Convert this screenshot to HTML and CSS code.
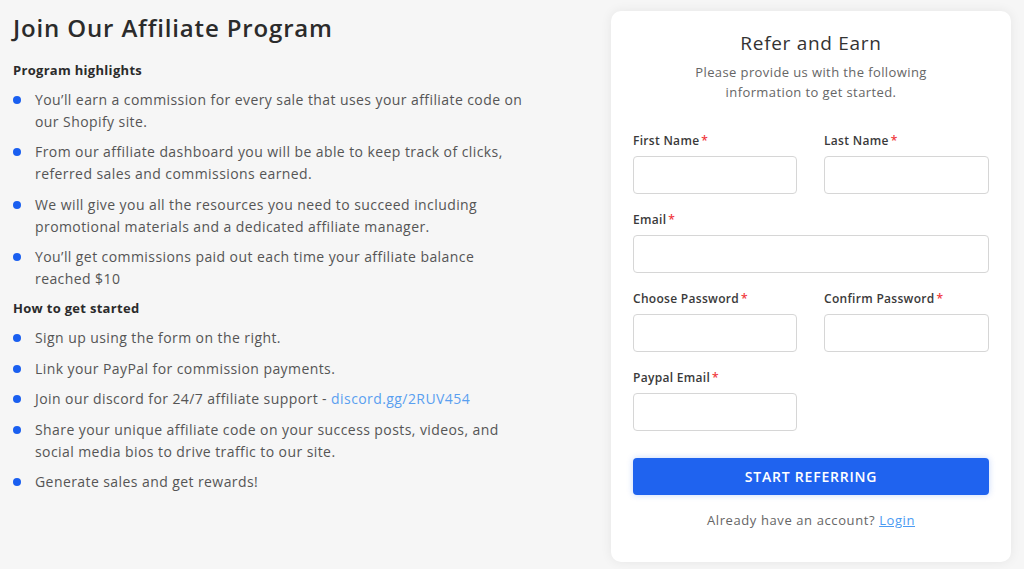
FILE: index.html
```html
<!DOCTYPE html>
<html lang="en">
<head>
<meta charset="utf-8">
<title>Join Our Affiliate Program</title>
<link rel="stylesheet" href="styles.css">
</head>
<body>
<div class="page">
  <section class="info">
    <h1 class="title">Join Our Affiliate Program</h1>
    <h2 class="sub">Program highlights</h2>
    <ul class="list">
      <li>You’ll earn a commission for every sale that uses your affiliate code on<br>our Shopify site.</li>
      <li>From our affiliate dashboard you will be able to keep track of clicks,<br>referred sales and commissions earned.</li>
      <li>We will give you all the resources you need to succeed including<br>promotional materials and a dedicated affiliate manager.</li>
      <li>You’ll get commissions paid out each time your affiliate balance<br>reached $10</li>
    </ul>
    <h2 class="sub">How to get started</h2>
    <ul class="list">
      <li>Sign up using the form on the right.</li>
      <li>Link your PayPal for commission payments.</li>
      <li>Join our discord for 24/7 affiliate support - <a class="link" href="#">discord.gg/2RUV454</a></li>
      <li>Share your unique affiliate code on your success posts, videos, and<br>social media bios to drive traffic to our site.</li>
      <li>Generate sales and get rewards!</li>
    </ul>
  </section>
  <form class="card">
    <h2 class="card-title">Refer and Earn</h2>
    <p class="card-text">Please provide us with the following<br>information to get started.</p>
    <div class="grid">
      <label class="field"><span class="label">First Name<i class="req">*</i></span><input class="input" type="text"></label>
      <label class="field"><span class="label">Last Name<i class="req">*</i></span><input class="input" type="text"></label>
      <label class="field wide"><span class="label">Email<i class="req">*</i></span><input class="input" type="email"></label>
      <label class="field"><span class="label">Choose Password<i class="req">*</i></span><input class="input" type="password"></label>
      <label class="field"><span class="label">Confirm Password<i class="req">*</i></span><input class="input" type="password"></label>
      <label class="field"><span class="label">Paypal Email<i class="req">*</i></span><input class="input" type="email"></label>
    </div>
    <button class="btn" type="button">START REFERRING</button>
    <p class="login">Already have an account? <a class="login-link" href="#">Login</a></p>
  </form>
</div>
</body>
</html>
```

FILE: styles.css
```css
* { box-sizing: border-box; }
html, body { margin: 0; padding: 0; }
body {
  background: #f6f6f6;
  font-family: "Open Sans", "Noto Sans", sans-serif;
  color: #333;
  width: 1024px;
  height: 569px;
  overflow: hidden;
}
.page {
  display: flex;
  justify-content: space-between;
  align-items: flex-start;
  padding: 11px 13px 0 13px;
}
.title {
  margin: 1px 0 0;
  font-size: 24px;
  line-height: 32px;
  font-weight: 600;
  letter-spacing: 0.85px;
  color: #2b2b2b;
}
.sub {
  margin: 16px 0 0;
  font-size: 13px;
  line-height: 20px;
  font-weight: 700;
  letter-spacing: 0.3px;
  color: #2b2b2b;
}
.list + .sub { margin-top: 8px; }
.list {
  list-style: none;
  margin: 0;
  padding: 0;
}
.list li {
  position: relative;
  margin-top: 8.6px;
  padding-left: 22px;
  font-size: 14px;
  line-height: 22px;
  letter-spacing: 0.42px;
  color: #555;
}
.list li::before {
  content: "";
  position: absolute;
  left: 0;
  top: 7px;
  width: 8px;
  height: 8px;
  border-radius: 50%;
  background: #1a5ff0;
}
.link { color: #5a9ff0; text-decoration: none; }
.card {
  width: 400px;
  background: #fff;
  border-radius: 10px;
  box-shadow: 0 0 12px rgba(0,0,0,0.07);
  padding: 20px 22px 32px;
  display: flex;
  flex-direction: column;
}
.card-title {
  margin: 0;
  text-align: center;
  font-size: 19px;
  line-height: 24px;
  font-weight: 500;
  letter-spacing: 0.7px;
  color: #333;
}
.card-text {
  margin: 7px 0 0;
  text-align: center;
  font-size: 13px;
  line-height: 20px;
  letter-spacing: 0.4px;
  color: #666;
}
.grid {
  margin-top: 31px;
  display: grid;
  grid-template-columns: 164px 165px;
  column-gap: 27px;
  row-gap: 18px;
}
.wide { grid-column: 1 / -1; }
.field { display: flex; flex-direction: column; }
.label {
  font-size: 12px;
  line-height: 16px;
  font-weight: 600;
  letter-spacing: 0.3px;
  color: #3a3a3a;
  margin-bottom: 7px;
}
.req { font-style: normal; color: #f0383d; margin-left: 2px; }
.input {
  height: 38px;
  border: 1px solid #d6d6d6;
  border-radius: 4px;
  background: #fff;
  font: inherit;
  width: 100%;
}
.wide .input { width: 356px; }
.btn {
  margin-top: 27px;
  height: 37px;
  border: none;
  border-radius: 4px;
  background: #1f63ef;
  box-shadow: 0 0 6px rgba(31,99,239,0.25);
  color: #fff;
  font-family: inherit;
  font-size: 14px;
  font-weight: 600;
  letter-spacing: 0.8px;
}
.login {
  margin: 15px 0 0;
  text-align: center;
  font-size: 13px;
  line-height: 20px;
  letter-spacing: 0.6px;
  color: #666;
}
.login-link { color: #4b9bf3; }
```
